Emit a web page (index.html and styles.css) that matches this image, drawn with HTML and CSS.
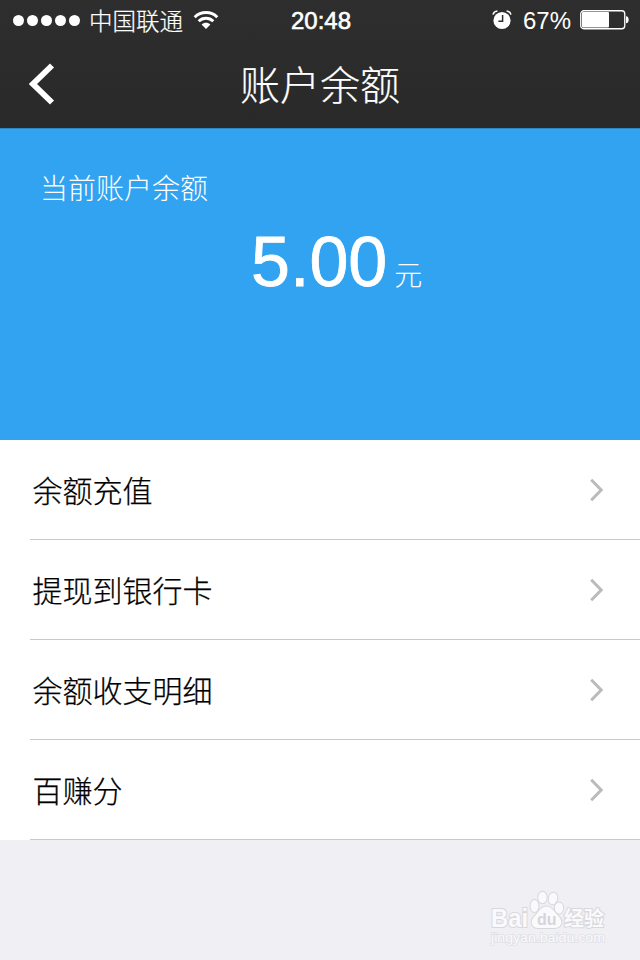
FILE: index.html
```html
<!DOCTYPE html>
<html lang="zh-CN">
  <head>
    <meta charset="UTF-8" />
    <meta name="viewport" content="width=device-width, initial-scale=1.0" />
    <title>账户余额</title>
    <link rel="stylesheet" href="styles.css">
  </head>
  <body>
    <header class="header">
      <div class="status">
        <div class="status-left">
          <div class="signal"><i></i><i></i><i></i><i></i><i></i></div>
          <span class="carrier">中国联通</span>
          <svg class="wifi" width="26" height="20" viewBox="0 0 26 20" fill="none" stroke="#fff" stroke-width="3">
            <path d="M1.7 7.2C8 1 18 1 24.3 7.2" />
            <path d="M5.7 11.2C9.8 7.2 16.2 7.2 20.3 11.2" />
            <path d="M13 19L8.6 14.5C11 12.2 15 12.2 17.4 14.5Z" fill="#fff" stroke="none" />
          </svg>
        </div>
        <span class="time">20:48</span>
        <div class="status-right">
          <svg class="alarm" width="20" height="20" viewBox="0 0 20 20">
            <circle cx="10" cy="10.5" r="8.6" fill="#fff" />
            <path d="M1 4.6Q1.8 1.4 5.4 1.1M14.6 1.1Q18.2 1.4 19 4.6" fill="none" stroke="#fff" stroke-width="1.5" />
            <path d="M10.6 5V11.2H6.4" fill="none" stroke="#2d2d2d" stroke-width="1.5" />
          </svg>
          <span class="percent">67%</span>
          <svg class="battery" width="49" height="20" viewBox="0 0 49 20">
            <rect x=".75" y=".75" width="44" height="18" rx="3" fill="none" stroke="#fff" stroke-width="1.3" />
            <rect x="2" y="2" width="27" height="15.5" rx="1" fill="#fff" />
            <path d="M46 6.3C49.6 6.3 49.6 13.3 46 13.3Z" fill="#fff" />
          </svg>
        </div>
      </div>
      <div class="nav">
        <svg class="back" width="26" height="42" viewBox="0 0 26 42">
          <path d="M23 2.5L4 21L23 39.5" fill="none" stroke="#fff" stroke-width="5.8" />
        </svg>
        <h1 class="title">账户余额</h1>
      </div>
    </header>

    <section class="balance">
      <p class="balance-label">当前账户余额</p>
      <p class="balance-amount">5.00<span class="unit">元</span></p>
    </section>

    <ul class="menu">
      <li class="menu-item"><span>余额充值</span><svg class="arrow" width="14" height="24" viewBox="0 0 14 24"><path d="M1.2 1.8L11.2 12L1.2 22.2" /></svg></li>
      <li class="menu-item"><span>提现到银行卡</span><svg class="arrow" width="14" height="24" viewBox="0 0 14 24"><path d="M1.2 1.8L11.2 12L1.2 22.2" /></svg></li>
      <li class="menu-item"><span>余额收支明细</span><svg class="arrow" width="14" height="24" viewBox="0 0 14 24"><path d="M1.2 1.8L11.2 12L1.2 22.2" /></svg></li>
      <li class="menu-item"><span>百赚分</span><svg class="arrow" width="14" height="24" viewBox="0 0 14 24"><path d="M1.2 1.8L11.2 12L1.2 22.2" /></svg></li>
    </ul>

    <footer class="footer">
      <svg class="logo" width="120" height="58" viewBox="0 0 120 58">
        <g class="logo-shape">
          <ellipse cx="46.5" cy="18" rx="4" ry="6" />
          <ellipse cx="54.5" cy="9.5" rx="4.2" ry="5.8" />
          <ellipse cx="65" cy="10.5" rx="4.2" ry="5.8" transform="rotate(12 65 10.5)" />
          <ellipse cx="71" cy="20" rx="4.2" ry="5.5" />
          <path d="M58.5 18.5C64 18.5 66 24 70.5 28C76 34 73 40 66.5 40H50C43 40 42 33 46 29C51 24 52.5 18.5 58.5 18.5Z" />
        </g>
        <text class="logo-text" x="3" y="39" font-size="25" textLength="37" lengthAdjust="spacingAndGlyphs">Bai</text>
        <text class="logo-du" x="49" y="36.5" font-size="16">du</text>
        <text class="logo-text logo-cn" x="76" y="37.5" font-size="20">经验</text>
        <text class="logo-url" x="3" y="54" font-size="13" textLength="114" lengthAdjust="spacingAndGlyphs">jingyan.baidu.com</text>
      </svg>
    </footer>
  </body>
</html>
```
FILE: styles.css
```css
* {
  box-sizing: border-box;
}

body {
  margin: 0;
  background: #efeff4;
  font-family: "Liberation Sans", "Noto Sans CJK SC", sans-serif;
  font-weight: 300;
}

svg {
  display: block;
  flex: none;
}

.header {
  height: 128px;
  background: linear-gradient(#2e2e2e, #292929);
  color: #fff;
}

.status {
  display: grid;
  grid-template-columns: 1fr auto 1fr;
  align-items: center;
  height: 40px;
  padding: 0 11px 0 13px;
}

.status-left,
.status-right {
  display: flex;
  align-items: center;
}

.status-right {
  justify-content: flex-end;
}

.signal {
  display: flex;
  gap: 3px;
}

.signal i {
  width: 11px;
  height: 11px;
  border-radius: 50%;
  background: #fff;
}

.carrier {
  margin: 0 10px 0 9px;
  padding-top: 4px;
  font-size: 23.5px;
  line-height: 36px;
  -webkit-text-stroke: 0.2px #fff;
}

.time {
  padding-top: 1px;
  font-size: 24px;
  -webkit-text-stroke: 0.6px #fff;
}

.percent {
  margin: 0 9px 0 11px;
  padding-top: 2px;
  font-size: 24px;
}

.nav {
  display: grid;
  grid-template-columns: 60px 1fr 60px;
  align-items: center;
  height: 88px;
}

.back {
  margin-left: 29px;
}

.title {
  margin: 0;
  padding-top: 4px;
  font-size: 40px;
  font-weight: 300;
  line-height: 84px;
  text-align: center;
  -webkit-text-stroke: 0.2px #fff;
}

.balance {
  height: 312px;
  padding: 41px 40px 0;
  background: #32a3f0;
  border-top: 1px solid #2b86c4;
  color: #fff;
}

.balance-label {
  margin: 0;
  font-size: 28px;
  line-height: 40px;
}

.balance-amount {
  margin: 12px 0 0 211px;
  font-size: 70px;
  line-height: 80px;
  -webkit-text-stroke: 0.8px #fff;
}

.unit {
  margin-left: 7px;
  font-size: 28px;
  -webkit-text-stroke: 0;
}

.menu {
  margin: 0;
  padding: 0 0 0 30px;
  background: #fff;
  list-style: none;
}

.menu-item {
  display: flex;
  align-items: center;
  justify-content: space-between;
  height: 100px;
  padding: 0 36px 0 2.5px;
  border-bottom: 1px solid #c8c7cc;
  color: #000;
  font-size: 30px;
  -webkit-text-stroke: 0.25px #000;
}

.menu-item span {
  padding-bottom: 2px;
}

.arrow {
  fill: none;
  stroke: #bbb;
  stroke-width: 3;
}

.footer {
  display: flex;
  justify-content: flex-end;
  padding: 48px 32px 0 0;
}

.logo-shape,
.logo-text,
.logo-url {
  fill: #fafafc;
  stroke: #d8d8dc;
  stroke-width: 2;
  paint-order: stroke;
}

.logo-text {
  font-weight: 700;
}

.logo-cn {
  font-family: "Noto Sans CJK SC", sans-serif;
}

.logo-du {
  fill: #d5d5d9;
  font-weight: 700;
}

.logo-url {
  stroke: #e0e0e4;
  stroke-width: 1.5;
}
```
